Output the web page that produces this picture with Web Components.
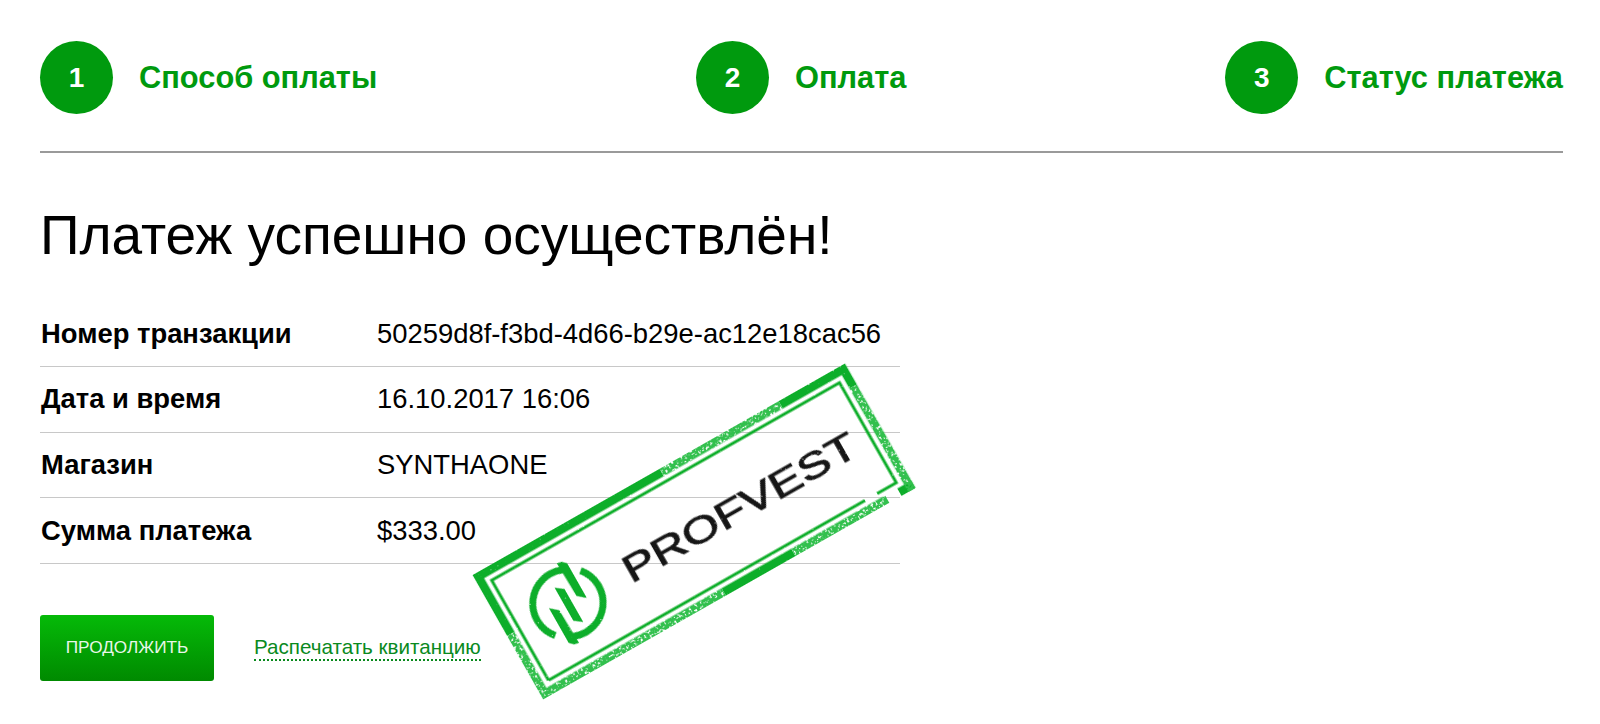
<!DOCTYPE html>
<html lang="ru">
<head>
<meta charset="utf-8">
<title>Статус платежа</title>
<style>
  html, body { margin: 0; background: #fff; }
  body { font-family: "Liberation Sans", Arial, sans-serif; color: #000; }
</style>
</head>
<body>
<pay-page>
  <pay-steps>
    <pay-step num="1">Способ оплаты</pay-step>
    <pay-step num="2">Оплата</pay-step>
    <pay-step num="3">Статус платежа</pay-step>
  </pay-steps>
  <h1 slot="title">Платеж успешно осуществлён!</h1>
  <pay-details slot="details">
    <pay-row label="Номер транзакции">50259d8f-f3bd-4d66-b29e-ac12e18cac56</pay-row>
    <pay-row label="Дата и время">16.10.2017 16:06</pay-row>
    <pay-row label="Магазин">SYNTHAONE</pay-row>
    <pay-row label="Сумма платежа">$333.00</pay-row>
  </pay-details>
  <pay-actions slot="actions">
    <pay-button>Продолжить</pay-button>
    <print-link>Распечатать квитанцию</print-link>
  </pay-actions>
  <stamp-mark slot="stamp"></stamp-mark>
</pay-page>

<script>
class PayPage extends HTMLElement {
  connectedCallback() {
    this.attachShadow({ mode: 'open' });
    this.shadowRoot.innerHTML = `
      <style>
        :host { display: block; position: relative; padding: 41px 37px 0 40px; height: 683px; overflow: hidden; }
        ::slotted(h1) { font-weight: 400; font-size: 55px; line-height: 60px; margin: 52px 0 36.5px 0; }
      </style>
      <slot></slot>
      <slot name="title"></slot>
      <slot name="details"></slot>
      <slot name="actions"></slot>
      <slot name="stamp"></slot>
    `;
  }
}

class PaySteps extends HTMLElement {
  connectedCallback() {
    this.attachShadow({ mode: 'open' });
    this.shadowRoot.innerHTML = `
      <style>
        :host { display: flex; justify-content: space-between; padding-bottom: 37px; border-bottom: 2px solid #9a9a9a; }
      </style>
      <slot></slot>
    `;
  }
}

class PayStep extends HTMLElement {
  connectedCallback() {
    this.attachShadow({ mode: 'open' });
    this.shadowRoot.innerHTML = `
      <style>
        :host { display: flex; align-items: center; gap: 26px; color: #009a0e; font-size: 30.8px; font-weight: 700; }
        .num { width: 73px; height: 73px; border-radius: 50%; background: #009a0e; color: #fff; display: flex; align-items: center; justify-content: center; font-size: 28px; }
      </style>
      <div class="num">${this.getAttribute('num')}</div>
      <div><slot></slot></div>
    `;
  }
}

class PayDetails extends HTMLElement {
  connectedCallback() {
    this.attachShadow({ mode: 'open' });
    this.shadowRoot.innerHTML = `
      <style>
        :host { display: block; width: 860px; }
      </style>
      <slot></slot>
    `;
  }
}

class PayRow extends HTMLElement {
  connectedCallback() {
    this.attachShadow({ mode: 'open' });
    this.shadowRoot.innerHTML = `
      <style>
        :host { display: grid; grid-template-columns: 337px 1fr; align-items: center; height: 64.6px; border-bottom: 1px solid #c8c8c8; font-size: 27.4px; }
        .label { font-weight: 700; padding-left: 1px; }
      </style>
      <div class="label">${this.getAttribute('label')}</div>
      <div><slot></slot></div>
    `;
  }
}

class PayActions extends HTMLElement {
  connectedCallback() {
    this.attachShadow({ mode: 'open' });
    this.shadowRoot.innerHTML = `
      <style>
        :host { display: flex; align-items: center; gap: 40px; margin-top: 51px; }
      </style>
      <slot></slot>
    `;
  }
}

class PayButton extends HTMLElement {
  connectedCallback() {
    this.attachShadow({ mode: 'open' });
    this.shadowRoot.innerHTML = `
      <style>
        :host { display: flex; align-items: center; justify-content: center; width: 174px; height: 66px; border-radius: 3px; background: linear-gradient(#05ba08, #008a00); color: #e8f7e8; font-size: 17.2px; text-transform: uppercase; }
      </style>
      <slot></slot>
    `;
  }
}

class PrintLink extends HTMLElement {
  connectedCallback() {
    this.attachShadow({ mode: 'open' });
    this.shadowRoot.innerHTML = `
      <style>
        :host { display: block; color: #0a8a1e; font-size: 20.6px; line-height: 24px; border-bottom: 2px dotted #0a8a1e; }
      </style>
      <slot></slot>
    `;
  }
}

class StampMark extends HTMLElement {
  connectedCallback() {
    this.attachShadow({ mode: 'open' });
    this.shadowRoot.innerHTML = `
      <style>
        :host { position: absolute; left: 480px; top: 459.5px; width: 428px; height: 143px; transform: rotate(-29.6deg); pointer-events: none; }
        svg { display: block; overflow: visible; }
        text { font-family: "Liberation Sans", Arial, sans-serif; font-size: 37.5px; font-weight: 400; fill: #161616; stroke: #161616; stroke-width: .9px; }
        .band { fill: none; stroke: #0fae2b; stroke-width: 8.5; }
        .thin { fill: none; stroke: #0fae2b; stroke-width: 3; }
        .soft { stroke: #33c04e; }
      </style>
      <svg width="428" height="143" viewBox="0 0 428 143">
        <defs>
          <filter id="worn-light" x="-5%" y="-20%" width="110%" height="140%">
            <feTurbulence type="fractalNoise" baseFrequency=".5" numOctaves="2" seed="4" result="n"/>
            <feColorMatrix in="n" type="matrix" values="0 0 0 0 0  0 0 0 0 0  0 0 0 0 0  0 0 0 -9 7.6" result="m"/>
            <feComposite in="SourceGraphic" in2="m" operator="in"/>
          </filter>
          <filter id="worn-heavy" x="-5%" y="-20%" width="110%" height="140%">
            <feTurbulence type="fractalNoise" baseFrequency=".42" numOctaves="3" seed="11" result="n"/>
            <feColorMatrix in="n" type="matrix" values="0 0 0 0 0  0 0 0 0 0  0 0 0 0 0  0 0 0 -9 6.2" result="m"/>
            <feComposite in="SourceGraphic" in2="m" operator="in"/>
          </filter>
        </defs>

        <!-- outer band -->
        <g filter="url(#worn-light)">
          <path class="band" d="M0 4.2H215"/>
          <path class="band" d="M352 4.2H428"/>
          <path class="band" d="M4.2 0V70"/>
          <path class="band" d="M424 0V24"/>
          <path class="band" d="M412 138.800H428"/>
          <path class="band" d="M210 138.800H290"/>
        </g>
        <g filter="url(#worn-heavy)">
          <path class="band soft" d="M215 4.2H352"/>
          <path class="band soft" d="M424 24V143"/>
          <path class="band soft" d="M4.200 70V143"/>
          <path class="band soft" d="M0 138.800H210"/>
          <path class="band soft" d="M290 138.800H398"/>
        </g>

        <!-- inner line -->
        <g filter="url(#worn-light)">
          <path class="thin" d="M14 129V14H414V129H392"/>
          <path class="thin" d="M14 129H378"/>
        </g>

        <!-- logo -->
        <g transform="translate(69 71.5)" fill="#0fae2b" filter="url(#worn-light)">
          <path fill="none" stroke="#0fae2b" stroke-width="7" d="M-27 22A34 34 0 0 1 12 -31.500"/>
          <path fill="none" stroke="#0fae2b" stroke-width="7" d="M27 -22A34 34 0 0 1 -12 31.500"/>
          <polygon points="10,-40 15,-39 19,-35 19,5 11,-2"/>
          <polygon points="-4,-20 4,-14 4,24 -4,18"/>
          <polygon points="-19,-5 -11,2 -10,40 -15,39 -19,35"/>
        </g>

        <text x="134" y="86" textLength="263" lengthAdjust="spacingAndGlyphs" filter="url(#worn-light)">PROFVEST</text>
      </svg>
    `;
  }
}

customElements.define('pay-page', PayPage);
customElements.define('pay-steps', PaySteps);
customElements.define('pay-step', PayStep);
customElements.define('pay-details', PayDetails);
customElements.define('pay-row', PayRow);
customElements.define('pay-actions', PayActions);
customElements.define('pay-button', PayButton);
customElements.define('print-link', PrintLink);
customElements.define('stamp-mark', StampMark);
</script>
</body>
</html>
